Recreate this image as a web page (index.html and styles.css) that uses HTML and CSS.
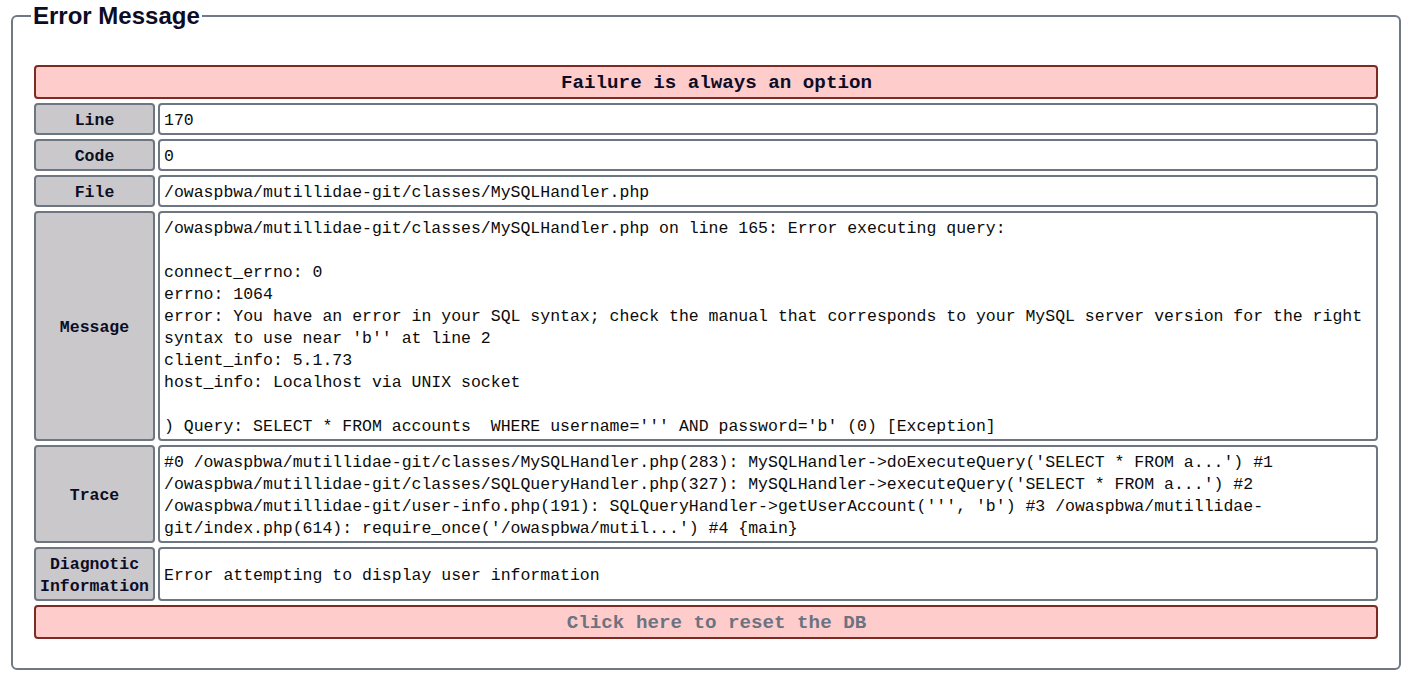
FILE: index.html
```html
<!DOCTYPE html>
<html>
<head>
<meta charset="utf-8">
<title>Error Message</title>
<link rel="stylesheet" href="styles.css">
</head>
<body>
<fieldset class="error-box">
  <legend class="error-legend">Error Message</legend>
  <div class="error-grid">
    <div class="cell banner">Failure is always an option</div>

    <div class="cell label">Line</div>
    <div class="cell value">170</div>

    <div class="cell label">Code</div>
    <div class="cell value">0</div>

    <div class="cell label">File</div>
    <div class="cell value">/owaspbwa/mutillidae-git/classes/MySQLHandler.php</div>

    <div class="cell label">Message</div>
    <div class="cell value pre">/owaspbwa/mutillidae-git/classes/MySQLHandler.php on line 165: Error executing query:

connect_errno: 0
errno: 1064
error: You have an error in your SQL syntax; check the manual that corresponds to your MySQL server version for the right
syntax to use near 'b'' at line 2
client_info: 5.1.73
host_info: Localhost via UNIX socket

) Query: SELECT * FROM accounts  WHERE username=''' AND password='b' (0) [Exception]</div>

    <div class="cell label">Trace</div>
    <div class="cell value pre">#0 /owaspbwa/mutillidae-git/classes/MySQLHandler.php(283): MySQLHandler-&gt;doExecuteQuery('SELECT * FROM a...') #1
/owaspbwa/mutillidae-git/classes/SQLQueryHandler.php(327): MySQLHandler-&gt;executeQuery('SELECT * FROM a...') #2
/owaspbwa/mutillidae-git/user-info.php(191): SQLQueryHandler-&gt;getUserAccount(''', 'b') #3 /owaspbwa/mutillidae-
git/index.php(614): require_once('/owaspbwa/mutil...') #4 {main}</div>

    <div class="cell label">Diagnotic<br>Information</div>
    <div class="cell value">Error attempting to display user information</div>

    <div class="cell banner reset">Click here to reset the DB</div>
  </div>
</fieldset>
</body>
</html>
```

FILE: styles.css
```css
html, body {
  background: #ffffff;
}

body {
  margin: 3px 13px 0 11px;
  font-family: "Liberation Mono", "DejaVu Sans Mono", monospace;
}

.error-box {
  margin: 0;
  border: 2px solid #707883;
  border-radius: 6px;
  padding: 36px 21px 29px 21px;
}

.error-legend {
  font-family: "Liberation Sans", Arial, sans-serif;
  font-weight: bold;
  font-size: 24px;
  line-height: 26px;
  color: #0c0c24;
  padding: 0 2px;
  margin-left: -3px;
}

.error-grid {
  display: grid;
  grid-template-columns: 121px 1fr;
  column-gap: 3px;
  row-gap: 4px;
}

.cell {
  border: 2px solid #6e7681;
  border-radius: 4px;
  padding: 5px 5px 1px 5px;
  font-size: 16.5px;
  line-height: 22px;
}

.banner {
  grid-column: 1 / span 2;
  background: #ffcccc;
  border-color: #7d2a22;
  text-align: center;
  font-weight: bold;
  font-size: 19.2px;
  line-height: 24px;
  color: #0c0c24;
  padding: 4px 5px 2px 26px;
}

.reset {
  color: #6b7380;
}

.label {
  display: flex;
  align-items: center;
  justify-content: center;
  text-align: center;
  font-weight: bold;
  color: #0c0c24;
  padding: 5px 2px 1px 2px;
  background-color: #c8c9cc;
  background-image: radial-gradient(circle, rgba(255, 180, 180, 0.3) 0.6px, transparent 0.8px);
  background-size: 4px 4px;
}

.value {
  display: flex;
  flex-direction: column;
  justify-content: center;
  background: #ffffff;
  color: #0b0b0b;
  padding-left: 4px;
}

.pre {
  white-space: pre;
}
```
